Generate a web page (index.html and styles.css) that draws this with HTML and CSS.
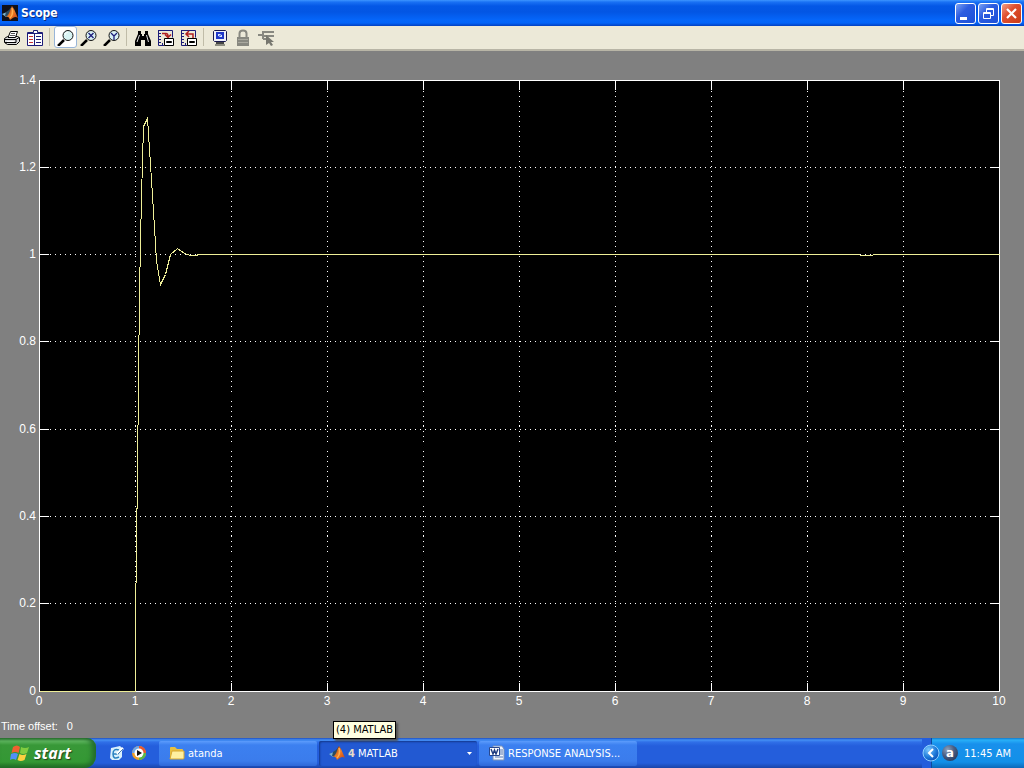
FILE: index.html
```html
<!DOCTYPE html>
<html lang="en">
<head>
<meta charset="utf-8">
<title>Scope</title>
<link rel="stylesheet" href="styles.css">
</head>
<body>
<svg class="defs" width="0" height="0" aria-hidden="true">
  <defs>
    <linearGradient id="flame" x1="0" y1="0" x2="1" y2="1"><stop offset="0" stop-color="#7a1c08"/><stop offset=".5" stop-color="#f08028"/><stop offset="1" stop-color="#c03a10"/></linearGradient>
    <radialGradient id="orb" cx=".35" cy=".3" r=".8"><stop offset="0" stop-color="#7cc8ff"/><stop offset=".6" stop-color="#1c78d8"/><stop offset="1" stop-color="#0a48b0"/></radialGradient>
    <radialGradient id="ball" cx=".35" cy=".3" r=".8"><stop offset="0" stop-color="#8fa4c0"/><stop offset=".5" stop-color="#4a5f84"/><stop offset="1" stop-color="#26395c"/></radialGradient>
    <symbol id="matlab" viewBox="0 0 16 16">
      <path d="M0 9 5 7 7 10 4 12Z" fill="#7cb4d0"/>
      <path d="M4 7 7 5 10 1 9 8 6 12 3 11Z" fill="#2c4c60"/>
      <path d="M10 1C12 3 14 9 16 13 13 11 12 12 8 15 7 12 6 11 4 12 8 9 8 4 10 1Z" fill="url(#flame)"/>
      <path d="M10 3C11 7 10 11 8 13" fill="none" stroke="#ffb050" stroke-width="1.500"/>
    </symbol>
  </defs>
</svg>
<main class="window">
  <header class="titlebar">
    <span class="app-icon"><svg width="16" height="16"><use href="#matlab"/></svg></span>
    <h1 class="title">Scope</h1>
    <div class="controls">
      <button class="control" aria-label="Minimize"><svg width="19" height="19"><path d="M4 13h7v3H4z" fill="#fff"/></svg></button>
      <button class="control" aria-label="Restore"><svg width="19" height="19" fill="none" stroke="#fff"><path d="M7.500 8V4.500h7v7H12M7 5.500h8M4.500 8.500h7v6h-7zM4 9.500h8"/></svg></button>
      <button class="control close" aria-label="Close"><svg width="19" height="19"><path d="M5 5 14 14M14 5 5 14" stroke="#fff" stroke-width="2.200"/></svg></button>
    </div>
  </header>
  <nav class="toolbar" aria-label="Scope tools">
    <button class="tool" aria-label="Print"><svg width="18" height="18"><path d="M1.500 9.500 4.500 7.500h10l2 1v4l-3 3h-9l-3-2z" fill="#ddd" stroke="#000"/><path d="M5 8.500 7.500 2.500h7L12.500 8.500z" fill="#fff" stroke="#000"/><path d="M8 4.500h4M7 6.500h5" stroke="#555"/><path d="M2 10.500h11l3-2M2 13.500h11v-3" fill="none" stroke="#000"/><path d="M4 12.500h7" stroke="#fff"/></svg></button>
    <button class="tool" aria-label="Parameters"><svg width="18" height="18" fill="#fff" stroke="#1c1c78"><path d="M1.500 3.500h6v-2h4v2h5v13h-15z"/><path d="M8.500 4v12M2 4.500h6M9 4.500h7" fill="none"/><path d="M3 7.500h4M3 10.500h4M3 13.500h4" stroke="#c83030"/><path d="M10 7.500h5M10 10.500h5M10 13.500h5"/></svg></button>
    <span class="divider"></span>
    <button class="tool pressed" aria-label="Zoom" aria-pressed="true"><svg width="18" height="18"><path d="M1 17 7 11" stroke="#000" stroke-width="2.500"/><circle cx="11" cy="6.500" r="5" fill="#d8f4f4" stroke="#111"/><path d="M8 6q1-3 3-3" stroke="#fff" fill="none"/></svg></button>
    <button class="tool" aria-label="Zoom X-axis"><svg width="18" height="18"><path d="M1 17 7 11" stroke="#000" stroke-width="2.500"/><circle cx="11" cy="6.500" r="5" fill="#d8f0f4" stroke="#111"/><path d="M8.500 4 13.500 9M13.500 4 8.500 9" stroke="#1c1c78" stroke-width="1.300"/></svg></button>
    <button class="tool" aria-label="Zoom Y-axis"><svg width="18" height="18"><path d="M1 17 7 11" stroke="#000" stroke-width="2.500"/><circle cx="11" cy="6.500" r="5" fill="#d8f0f4" stroke="#111"/><path d="M8 4 11 7 14 4M11 7v4" fill="none" stroke="#1c1c78" stroke-width="1.300"/></svg></button>
    <span class="divider"></span>
    <button class="tool" aria-label="Autoscale"><svg width="18" height="18"><path d="M4 2h3v3h1v2h2V5h1V2h3v3l3 7v5h-6v-6H7v6H1v-5l3-7z"/><path d="M5.500 6 3 13M12.500 6l2 7" stroke="#ddd"/></svg></button>
    <button class="tool" aria-label="Save current axes settings"><svg width="18" height="18" fill="none" stroke="#1c1c78"><path d="M1.500 1.500h14v7M1.500 1v15.500h6M2 4.500h2M2 7.500h2M2 10.500h2M2 13.500h2M5.500 16v-2"/><path d="M5 4.500h4q2 0 2 3M8 5.500l3 3 3-3" stroke="#b02020" stroke-width="1.500"/><path d="M7.500 9.500h9v7h-9z" fill="#fff" stroke="#000"/><path d="M9.500 12.500h5v1h-5z" stroke="#000"/></svg></button>
    <button class="tool" aria-label="Restore saved axes settings"><svg width="18" height="18" fill="none" stroke="#1c1c78"><path d="M1.500 1.500h14v7M1.500 1v15.500h6M2 4.500h2M2 7.500h2M2 10.500h2M2 13.500h2M5.500 16v-2"/><path d="M13 9V5H6M9 2 6 5l3 3" stroke="#b02020" stroke-width="1.500"/><path d="M7.500 9.500h9v7h-9z" fill="#fff" stroke="#000"/><path d="M9.500 12.500h5v1h-5z" stroke="#000"/></svg></button>
    <span class="divider"></span>
    <button class="tool" aria-label="Floating scope"><svg width="18" height="18"><path d="M3.500 1.500h11l1 1v9l-1 1h-11l-1-1v-9z" fill="#f0f0f8" stroke="#181850"/><path d="M5 3h8v7H5z" fill="#2038c8"/><path d="M7 5h4v3H7z" fill="#d8e4ff"/><path d="M7 8l4-3" stroke="#2038c8"/><path d="M5 13h8v2H5z" fill="#444"/><path d="M4 15h10v2H4z" fill="#8c8c80"/></svg></button>
    <button class="tool" aria-label="Lock axes" disabled><svg width="18" height="18"><path d="M5.500 9V4.500q0-3 3.500-3t3.500 3V9" fill="none" stroke="#888880" stroke-width="2"/><path d="M3 8h12v9H3z" fill="#888880"/><path d="M4 10.500h10M4 13.500h10" stroke="#aaa99f"/></svg></button>
    <button class="tool" aria-label="Signal selection" disabled><svg width="18" height="18"><path d="M1 6h5M5 3h12M6 7h11M6 2v8M6 10h5" stroke="#888880" stroke-width="2" fill="none"/><path d="M9 6v10l3-2 2 3 2-1-2-3h3z" fill="#77776f"/></svg></button>
  </nav>
  <section class="scope">
    <svg class="plot" viewBox="0 0 1024 664" role="img" aria-label="Step response from 0 to 10 seconds">
      <path d="M39 29h961v611H39z"/>
      <g transform="translate(.5 .5)" fill="none" shape-rendering="crispEdges">
        <path class="grid" d="M135 29V640M231 29V640M327 29V640M423 29V640M519 29V640M615 29V640M711 29V640M807 29V640M903 29V640M39 116H999M39 203H999M39 290H999M39 378H999M39 465H999M39 552H999"/>
        <path class="axis" d="M39 29H999V640H39ZM135 29v9m0 593v9M231 29v9m0 593v9M327 29v9m0 593v9M423 29v9m0 593v9M519 29v9m0 593v9M615 29v9m0 593v9M711 29v9m0 593v9M807 29v9m0 593v9M903 29v9m0 593v9M39 116h9m941 0h10M39 203h9m941 0h10M39 290h9m941 0h10M39 378h9m941 0h10M39 465h9m941 0h10M39 552h9m941 0h10"/>
        <path class="trace" d="M39 640H135V570L137 420 139 240 141 145 143 75 147 67 152 144 156 209 160 233 165 223 170 203 177 197 184 202 190 204H196L198 203H859L860 204H872L873 203H999"/>
      </g>
      <g class="label y-label">
        <text x="36" y="33">1.4</text><text x="36" y="120">1.2</text><text x="36" y="207">1</text><text x="36" y="294">0.8</text><text x="36" y="382">0.6</text><text x="36" y="469">0.4</text><text x="36" y="556">0.2</text><text x="36" y="644">0</text>
      </g>
      <g class="label x-label">
        <text x="39" y="654">0</text><text x="135" y="654">1</text><text x="231" y="654">2</text><text x="327" y="654">3</text><text x="423" y="654">4</text><text x="519" y="654">5</text><text x="615" y="654">6</text><text x="711" y="654">7</text><text x="807" y="654">8</text><text x="903" y="654">9</text><text x="999" y="654">10</text>
      </g>
    </svg>
    <p class="offset"><span>Time offset:</span><span>0</span></p>
  </section>
</main>
<footer class="taskbar">
  <button class="start"><svg width="20" height="20"><path d="M3 4q4-3 7 0L8.500 10q-3-2-7 0z" fill="#f06030"/><path d="M11 4q4 2 8 0l-2 6q-4 2-7 0z" fill="#80cc40"/><path d="M1 11q4-2 7 0l-2 6q-3-2-6 0z" fill="#5090f8"/><path d="M9.500 11q3 2 7 0l-2 6q-4 2-7 0z" fill="#fcd040"/></svg><span>start</span></button>
  <div class="quick">
    <button class="quick-item" aria-label="Show Desktop"><svg width="16" height="16"><path d="M3 3 12 1l2 2v9l-3 3H4l-2-2z" fill="#d8f0fc"/><path d="M11 5q-6-2-6 4t6 3M5 9h5l2-3" fill="none" stroke="#2880c0" stroke-width="1.500"/><path d="M9 9 15 3" stroke="#fff" stroke-width="2.500"/><path d="M10 9 15 4" stroke="#4880b0"/></svg></button>
    <button class="quick-item" aria-label="Media Player"><svg width="16" height="16"><circle cx="8" cy="8" r="7" fill="#f0a028"/><path d="M8 1A7 7 0 0 0 1 8h7z" fill="#70a8e8"/><path d="M15 8A7 7 0 0 1 8 15V8z" fill="#58b848"/><path d="M8 1A7 7 0 0 1 15 8H8z" fill="#e85830"/><circle cx="8" cy="8" r="4.500" fill="#fff"/><path d="M6 5v6l5-3z" fill="#111"/></svg></button>
  </div>
  <div class="tasks">
    <button class="task"><svg width="16" height="16"><path d="M1 3q0-1 1-1h4l2 2h5q1 0 1 1v9H1z" fill="#e8c040"/><path d="M3 6h12v7q0 1-1 1H1z" fill="#fff0a0" stroke="#d8a830"/></svg><span>atanda</span></button>
    <div class="task-wrap">
      <div class="tooltip" role="tooltip">(4) MATLAB</div>
      <button class="task active"><svg width="16" height="16"><use href="#matlab"/></svg><b class="count">4</b><span>MATLAB</span><svg class="arrow" width="5" height="3"><path d="M0 0h5L2.500 3z" fill="#fff"/></svg></button>
    </div>
    <button class="task"><svg width="16" height="16"><path d="M6 1h7l2 3v11H4V1z" fill="#f0f4fc" stroke="#7890b8"/><path d="M11 5h3M11 7h3M11 9h3M6 12h8" stroke="#5878b0"/><path d="M.500 2.500h10v8H.500z" fill="#fff" stroke="#284890"/><path d="M2 4l2 5 1.500-4L7 9l2-5" fill="none" stroke="#203c80" stroke-width="1.400"/></svg><span>RESPONSE ANALYSIS...</span></button>
  </div>
  <div class="tray">
    <button class="expand" aria-label="Show hidden icons"><svg width="18" height="18"><circle cx="9" cy="9" r="8" fill="url(#orb)" stroke="#8fd0ff"/><path d="M11 5 7 9l4 4" fill="none" stroke="#fff" stroke-width="2"/></svg></button>
    <span class="tray-icon"><svg width="16" height="16"><circle cx="8" cy="8" r="8" fill="url(#ball)"/></svg><b>a</b></span>
    <time class="clock">11:45 AM</time>
  </div>
</footer>
</body>
</html>
```
FILE: styles.css
```css
* { box-sizing: border-box; }
body { margin: 0; min-height: 100vh; display: flex; flex-direction: column; background: #808080; font-family: "Liberation Sans", Arial, sans-serif; font-size: 11px; }
button { margin: 0; padding: 0; border: 0; background: none; font: inherit; color: inherit; }
svg { display: block; flex: none; }
.defs { position: absolute; }
.window { flex: 1; display: flex; flex-direction: column; }

.titlebar { display: flex; align-items: center; height: 26px; padding: 0 2px; gap: 3px; background: linear-gradient(#3d95ff 0, #1a72f4 2px, #0458e6 6px, #0356e4 12px, #0566fa 20px, #0364f8 23px, #0340c0 26px); }
.app-icon { background: #101018; }
.title { flex: 1; margin: 0; color: #fff; font: bold 12px "DejaVu Sans Condensed", "DejaVu Sans", sans-serif; text-shadow: 1px 1px #0a2c80; }
.controls { display: flex; gap: 2px; }
.control { width: 21px; height: 21px; border: 1px solid #fff; border-radius: 3px; background: linear-gradient(135deg, #7ba2f4, #2c5ce0 40%, #1c50d8); }
.close { background: linear-gradient(135deg, #f0a08a, #e05030 40%, #c83c18); }

.toolbar { display: flex; align-items: center; height: 25px; padding-bottom: 1px; background: #ece9d8; border-bottom: 2px solid #b8b5a6; }
.tool { display: grid; place-items: center; width: 23px; height: 22px; }
.tool svg { width: 17px; height: 17px; }
.pressed { border: 1px solid #98b5d8; border-radius: 3px; background: #fff; }
.divider { width: 1px; height: 18px; margin: 0 4px 0 3px; background: #c0bca8; }

.scope { flex: 1; color: #fff; }
.plot { width: 100%; height: auto; }
.grid { stroke: #fff; stroke-dasharray: 1 4; }
.axis { stroke: #fff; }
.trace { stroke: #eeee98; }
.label { fill: #fff; font-size: 12px; }
.y-label { text-anchor: end; }
.x-label { text-anchor: middle; }
.offset { display: flex; gap: 9px; margin: 0; padding: 4px 1px; font-size: 11px; line-height: 14px; }

.taskbar { display: flex; height: 30px; color: #fff; background: linear-gradient(#1f4ec0 0, #4490f4 2px, #3070e8 4px, #245edc 8px, #245edc 25px, #1a44a8 30px); font-family: "DejaVu Sans Condensed", "DejaVu Sans", sans-serif; }
.start { display: flex; align-items: center; gap: 4px; width: 96px; padding-left: 10px; border-radius: 0 9px 12px 0; background: linear-gradient(#2c7030 0, #60b860 3px, #389838 7px, #349834 24px, #1f6c22 30px); box-shadow: inset -4px 0 5px #236c2c; font: italic bold 16px "Open Sans", sans-serif; text-shadow: 1px 1px 1px #24441c; }
.quick { display: flex; align-items: center; gap: 7px; width: 63px; padding-left: 12px; }
.tasks { flex: 1; display: flex; align-items: center; gap: 2px; min-width: 0; }
.task-wrap { position: relative; }
.task { display: flex; align-items: center; gap: 3px; width: 158px; height: 25px; padding: 0 5px 0 10px; border-radius: 2px; background: linear-gradient(#5c9cfc, #3c80f0 4px, #3b7cec 20px, #2f68d8); white-space: nowrap; }
.active { background: #2259d2; box-shadow: inset 1px 1px 2px #12388c; }
.count { font-size: 11px; color: #e4dcc8; }
.arrow { margin-left: auto; }
.tooltip { position: absolute; left: 14px; bottom: 27px; padding: 1px 2px; border: 1px solid #000; background: #ffffe1; color: #000; line-height: 14px; white-space: nowrap; box-shadow: 2px 2px 2px #505050; }
.tray { display: flex; align-items: center; gap: 2px; padding-right: 13px; background: linear-gradient(90deg, #245edc 9px, #0c4c9c 9px, #0c4c9c 10px, transparent 10px), linear-gradient(#1478c8 0, #28b0f8 2px, #1890ec 6px, #1290e8 24px, #0c68b8 30px); }
.tray-icon { display: grid; place-items: center; margin-right: 4px; }
.tray-icon > * { grid-area: 1 / 1; }
.tray-icon b { font-size: 13px; line-height: 14px; }
```
